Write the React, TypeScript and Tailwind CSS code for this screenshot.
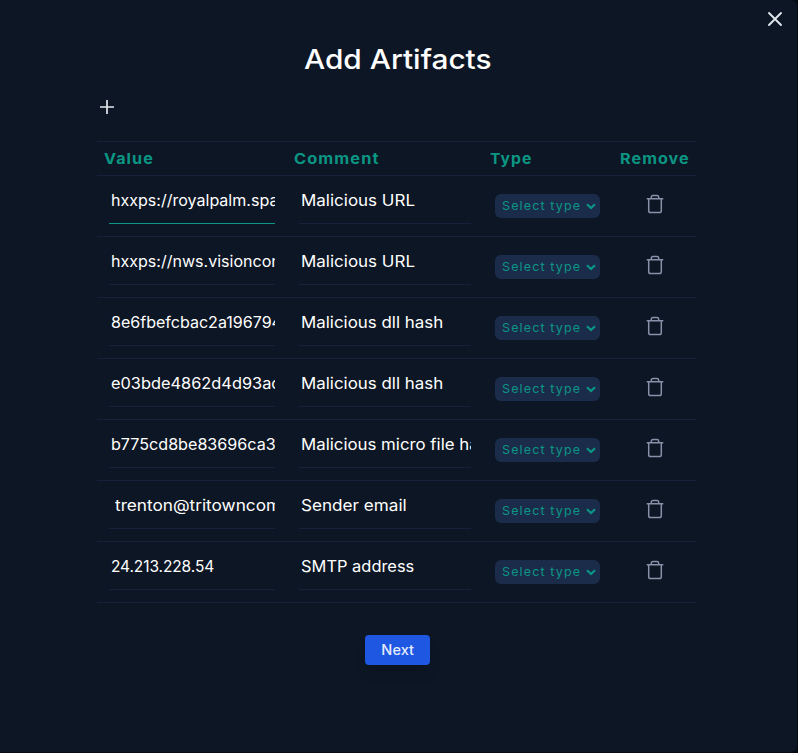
type Artifact = { value: string; comment: string; valueClass: string; commentClass: string };

const artifacts: Artifact[] = [
  { value: "hxxps://royalpalm.spa", comment: "Malicious URL", valueClass: "scale-x-[1.035]", commentClass: "scale-x-[1.095]" },
  { value: "hxxps://nws.visioncon", comment: "Malicious URL", valueClass: "scale-x-[1.035]", commentClass: "scale-x-[1.095]" },
  { value: "8e6fbefcbac2a196794", comment: "Malicious dll hash", valueClass: "scale-x-[1.035]", commentClass: "scale-x-[1.09]" },
  { value: "e03bde4862d4d93ac", comment: "Malicious dll hash", valueClass: "scale-x-[1.055]", commentClass: "scale-x-[1.09]" },
  { value: "b775cd8be83696ca3", comment: "Malicious micro file ha", valueClass: "scale-x-[1.04]", commentClass: "scale-x-[1.085]" },
  { value: "trenton@tritowncom", comment: "Sender email", valueClass: "ml-1 scale-x-[1.11]", commentClass: "scale-x-[1.105]" },
  { value: "24.213.228.54", comment: "SMTP address", valueClass: "tracking-[-0.1px]", commentClass: "scale-x-[1.06]" },
];

function TrashIcon() {
  return (
    <svg width="18" height="20" viewBox="0 0 18 20" fill="none" stroke="#8990a9" strokeWidth="1.5" strokeLinejoin="round">
      <path d="M.7 4.7h16.6M5.3 4.5V3.2q0-1.7 1.7-1.7h4q1.7 0 1.7 1.7v1.3" />
      <path d="M2.7 5v11.7q0 1.8 1.8 1.8h9q1.8 0 1.8-1.8V5" />
    </svg>
  );
}

function Row({ item, focused }: { item: Artifact; focused: boolean }) {
  return (
    <div className="grid h-[61px] grid-cols-[190px_196px_129px_84px] border-b border-[#18203b]">
      <div className="pl-3 pt-[10px]">
        <div className={`h-[38px] w-[166px] overflow-hidden whitespace-pre border-b pl-[2px] text-[15.5px] leading-[30px] text-white ${focused ? "border-[#0b9684]" : "border-[#18203b]"}`}>
          <span className={`inline-block origin-left ${item.valueClass}`}>{item.value}</span>
        </div>
      </div>
      <div className="pl-3 pt-[10px]">
        <div className="h-[38px] w-[172px] overflow-hidden whitespace-pre border-b border-[#18203b] pl-[2px] text-[15.5px] leading-[30px] text-white">
          <span className={`inline-block origin-left ${item.commentClass}`}>{item.comment}</span>
        </div>
      </div>
      <div className="pl-3 pt-[18px]">
        <button className="flex h-6 w-[105px] items-center justify-between rounded-[6px] bg-[#1b2c4b] pl-[7px] pr-1 text-[12px] tracking-[1.1px] text-[#0b9684]">
          <span className="inline-block origin-left scale-x-[1.04]">Select type</span>
          <svg width="10" height="7" viewBox="0 0 10 7" fill="none" stroke="#0b9684" strokeWidth="2.2">
            <path d="M1 1.2 5 5l4-3.8" />
          </svg>
        </button>
      </div>
      <div className="flex justify-center pl-[2px] pt-[18px]">
        <TrashIcon />
      </div>
    </div>
  );
}

export default function App() {
  return (
    <div className="h-[753px] w-[798px] bg-[#070b14] pb-px pr-px font-['Inter',sans-serif]">
      <main className="h-full rounded-r-[6px] bg-[#0d1624]">
        <div className="flex h-[37px] justify-end pr-[14px] pt-[11px]">
          <svg width="16" height="16" viewBox="0 0 16 16" stroke="#e1e6ee" strokeWidth="1.9" strokeLinecap="round">
            <path d="m2 2 12 12M14 2 2 14" />
          </svg>
        </div>
        <h1 className="h-[44px] pl-[304px] text-[27px] font-medium leading-[45px] text-white">
          <span className="inline-block origin-left scale-x-[1.105]">Add Artifacts</span>
        </h1>
        <div className="h-[60px] pl-[99px] pt-[18px]">
          <svg width="16" height="16" viewBox="0 0 16 16" stroke="#e5e7eb" strokeWidth="1.7">
            <path d="M8 1v14M1 8h14" />
          </svg>
        </div>
        <section className="ml-[97px] w-[599px] border-t border-[#18203b]">
          <div className="grid h-[34px] grid-cols-[190px_196px_130px_83px] border-b border-[#18203b] pl-[7px] text-[15px] font-bold leading-[34px] tracking-[1px] text-[#0b9684]">
            <span className="inline-block w-fit origin-left scale-x-[1.075]">Value</span>
            <span className="inline-block w-fit origin-left scale-x-[1.09]">Comment</span>
            <span className="inline-block w-fit origin-left scale-x-[1.05]">Type</span>
            <span className="inline-block w-fit origin-left scale-x-[1.075]">Remove</span>
          </div>
          {artifacts.map((item, i) => (
            <Row key={item.value} item={item} focused={i === 0} />
          ))}
        </section>
        <div className="pl-[365px] pt-8">
          <button className="h-[30px] w-[65px] rounded-[4px] bg-[#1d57e2] pb-[2px] text-[14px] font-medium text-[#e4ebfc] shadow-lg">
            <span className="inline-block scale-x-[1.04]">Next</span>
          </button>
        </div>
      </main>
    </div>
  );
}
